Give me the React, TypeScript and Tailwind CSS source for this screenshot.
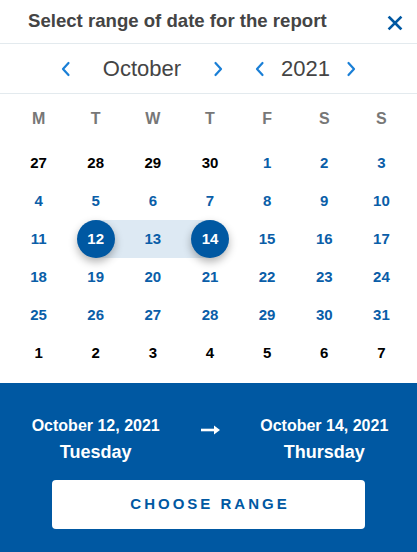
import React from "react";

const BLUE = "#0058a2";

function Chevron({ dir }: { dir: "left" | "right" }) {
  return (
    <svg width="12" height="16" viewBox="0 0 12 16" fill="none">
      {dir === "left" ? (
        <path d="M8.5 2 L3 8 L8.5 14" stroke="#1a7fd6" strokeWidth="2.2" strokeLinecap="round" strokeLinejoin="round" />
      ) : (
        <path d="M3.5 2 L9 8 L3.5 14" stroke="#1a7fd6" strokeWidth="2.2" strokeLinecap="round" strokeLinejoin="round" />
      )}
    </svg>
  );
}

type Day = { n: number; cur: boolean };

const weeks: Day[][] = (() => {
  const days: Day[] = [];
  [27, 28, 29, 30].forEach((n) => days.push({ n, cur: false }));
  for (let i = 1; i <= 31; i++) days.push({ n: i, cur: true });
  for (let i = 1; i <= 7; i++) days.push({ n: i, cur: false });
  const w: Day[][] = [];
  for (let i = 0; i < 6; i++) w.push(days.slice(i * 7, i * 7 + 7));
  return w;
})();

export default function App() {
  return (
    <div
      className="w-[417px] h-[552px] bg-white flex flex-col overflow-hidden"
      style={{ fontFamily: '"Liberation Sans", Arial, sans-serif' }}
    >
      {/* Header */}
      <div className="h-[44px] flex items-center border-b border-[#e3eaee] pl-[28px] pr-[14px] shrink-0">
        <div className="flex-1 text-[18.6px] font-bold text-[#444444] leading-none">Select range of date for the report</div>
        <svg width="16" height="16" viewBox="0 0 16 16" className="mt-[2px]">
          <path d="M2.5 2.5 L13.5 13.5 M13.5 2.5 L2.5 13.5" stroke={BLUE} strokeWidth="2.6" strokeLinecap="square" />
        </svg>
      </div>

      {/* Month/year nav */}
      <div className="h-[50px] flex items-center justify-center border-b border-[#e3eaee] shrink-0">
        <div className="flex items-center">
          <Chevron dir="left" />
          <div className="w-[140px] text-center text-[22px] text-[#444444] leading-none">October</div>
          <Chevron dir="right" />
          <div className="ml-[30px]"><Chevron dir="left" /></div>
          <div className="w-[79px] text-center text-[22px] text-[#444444] leading-none">2021</div>
          <Chevron dir="right" />
        </div>
      </div>

      {/* Calendar */}
      <div className="pl-[10px] pr-[7px] shrink-0">
        <div className="grid grid-cols-7 h-[46px] items-center pt-[4px]">
          {["M", "T", "W", "T", "F", "S", "S"].map((d, i) => (
            <div key={i} className="text-center text-[16px] font-bold text-[#777777]">{d}</div>
          ))}
        </div>
        <div className="mt-[4px] flex flex-col">
          {weeks.map((week, wi) => (
            <div key={wi} className="grid grid-cols-7 h-[38px]">
              {week.map((d, di) => {
                const sel = d.cur && (d.n === 12 || d.n === 14);
                const inRange = d.cur && d.n >= 12 && d.n <= 14;
                const start = d.cur && d.n === 12;
                const end = d.cur && d.n === 14;
                return (
                  <div key={di} className="relative flex items-center justify-center">
                    {inRange && (
                      <div
                        className={
                          "absolute top-0 bottom-0 bg-[#dde9f3] " +
                          (start ? "left-1/2 right-0" : end ? "left-0 right-1/2" : "left-0 right-0")
                        }
                      />
                    )}
                    {sel ? (
                      <div
                        className="relative w-[38px] h-[38px] rounded-full flex items-center justify-center text-white text-[15px] font-bold shadow-[0_4px_8px_rgba(0,0,0,0.3)]"
                        style={{ backgroundColor: BLUE }}
                      >
                        {d.n}
                      </div>
                    ) : (
                      <span className={"relative text-[15px] font-bold " + (d.cur ? "text-[#0a5ea8]" : "text-black")}>
                        {d.n}
                      </span>
                    )}
                  </div>
                );
              })}
            </div>
          ))}
        </div>
      </div>

      {/* Footer */}
      <div className="mt-[11px] flex-1 flex flex-col" style={{ backgroundColor: BLUE }}>
        <div className="pl-[10px] pr-[7px] pt-[33px] grid grid-cols-7 text-white">
          <div className="col-span-3 flex flex-col items-center">
            <div className="text-[16px] font-bold leading-[20px]">October 12, 2021</div>
            <div className="text-[18px] font-bold leading-[22px] mt-[5px]">Tuesday</div>
          </div>
          <div className="flex justify-center pt-[8px] pl-[2px]">
            <svg width="21" height="12" viewBox="0 0 21 12">
              <path d="M1 6 H16" stroke="white" strokeWidth="2.6" />
              <path d="M14 1.5 L20 6 L14 10.5 Z" fill="white" />
            </svg>
          </div>
          <div className="col-span-3 flex flex-col items-center">
            <div className="text-[16px] font-bold leading-[20px]">October 14, 2021</div>
            <div className="text-[18px] font-bold leading-[22px] mt-[5px]">Thursday</div>
          </div>
        </div>
        <div className="flex justify-center mt-[17px]">
          <button className="w-[313px] h-[49px] bg-white rounded-[4px] flex items-center justify-center">
            <span className="text-[15px] font-bold tracking-[0.2em] pl-[0.2em]" style={{ color: BLUE }}>
              CHOOSE RANGE
            </span>
          </button>
        </div>
      </div>
    </div>
  );
}
